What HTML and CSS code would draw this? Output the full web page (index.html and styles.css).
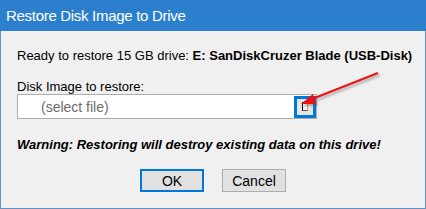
FILE: index.html
```html
<!DOCTYPE html>
<html>
<head>
<meta charset="utf-8">
<link rel="stylesheet" href="styles.css">
</head>
<body>
<div class="window">
  <div class="titlebar">Restore Disk Image to Drive</div>
  <div class="content">
    <p class="ready">Ready to restore 15 GB drive: <b>E: SanDiskCruzer Blade (USB-Disk)</b></p>
    <label class="label">Disk Image to restore:</label>
    <div class="filebox">
      <span class="placeholder">(select file)</span>
      <span class="browse"><span class="glyph"></span></span>
    </div>
    <p class="warning">Warning: Restoring will destroy existing data on this drive!</p>
    <div class="buttons">
      <span class="btn ok">OK</span>
      <span class="btn">Cancel</span>
    </div>
  </div>
  <svg class="arrow" width="426" height="209" viewBox="0 0 426 209">
    <defs>
      <filter id="sh" x="-20%" y="-20%" width="140%" height="140%">
        <feGaussianBlur stdDeviation="1.2"/>
      </filter>
    </defs>
    <g opacity="0.45" filter="url(#sh)" transform="translate(2,2)">
      <line x1="378" y1="73" x2="312" y2="99" stroke="#555" stroke-width="2"/>
      <polygon points="301,104 313,94 316,104" fill="#555"/>
    </g>
    <line x1="378" y1="73" x2="312" y2="99" stroke="#f01010" stroke-width="2"/>
    <polygon points="301,104 313,94 316,104" fill="#f01010"/>
  </svg>
</div>
</body>
</html>
```
FILE: styles.css
```css
html, body {
  margin: 0;
  padding: 0;
  background: #f0f0f0;
}
.window {
  position: relative;
  width: 426px;
  height: 209px;
  box-sizing: border-box;
  border: 1px solid #5e93c9;
  border-top: none;
  background: #f0f0f0;
  font-family: "Liberation Sans", Arial, sans-serif;
  font-size: 13px;
  color: #000;
  display: flex;
  flex-direction: column;
}
.titlebar {
  height: 31px;
  margin: 0 -1px;
  background: #2b7fcc;
  color: #fff;
  font-size: 15px;
  letter-spacing: -0.3px;
  line-height: 31px;
  padding-left: 6px;
  box-sizing: border-box;
}
.content {
  padding: 0 0 0 16px;
  display: flex;
  flex-direction: column;
}
.ready {
  margin: 17px 0 0 0;
  line-height: 15px;
}
.label {
  margin-top: 16px;
  line-height: 15px;
  display: block;
}
.filebox {
  margin-top: 0;
  width: 300px;
  height: 25px;
  box-sizing: border-box;
  border: 1px solid #adadad;
  background: #fff;
  display: flex;
  align-items: center;
  justify-content: space-between;
}
.placeholder {
  color: #6d6d6d;
  font-size: 14px;
  margin-left: 23px;
}
.browse {
  width: 22px;
  height: 22px;
  box-sizing: border-box;
  border: 3px solid #0078d7;
  background: #e5e5e5;
  display: flex;
  align-items: center;
  justify-content: center;
}
.glyph {
  width: 6px;
  height: 9px;
  border: 1px solid #000;
  box-sizing: border-box;
  border-right-color: #d0a060;
  border-bottom-color: #555;
  background: #f4f4f4;
}
.warning {
  margin: 18px 0 0 0;
  font-weight: bold;
  font-style: italic;
  line-height: 15px;
}
.buttons {
  margin-top: 17px;
  display: flex;
  gap: 18px;
  padding-left: 123px;
}
.btn {
  width: 64px;
  height: 23px;
  box-sizing: border-box;
  border: 1px solid #adadad;
  background: #e1e1e1;
  display: flex;
  align-items: center;
  justify-content: center;
  font-size: 14px;
}
.btn.ok {
  border: 2px solid #0078d7;
}
.arrow {
  position: absolute;
  left: -1px;
  top: 0;
  pointer-events: none;
}
```
